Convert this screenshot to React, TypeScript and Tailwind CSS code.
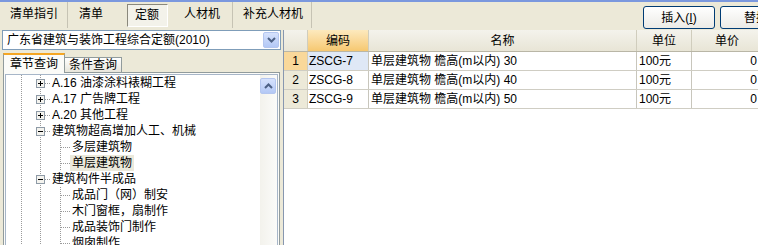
import React from "react";

type TreeRow = {
  level: 1 | 2;
  box?: "plus" | "minus";
  label: string;
  selected?: boolean;
};

const treeRows: TreeRow[] = [
  { level: 1, box: "plus", label: "A.16 油漆涂料裱糊工程" },
  { level: 1, box: "plus", label: "A.17 广告牌工程" },
  { level: 1, box: "plus", label: "A.20 其他工程" },
  { level: 1, box: "minus", label: "建筑物超高增加人工、机械" },
  { level: 2, label: "多层建筑物" },
  { level: 2, label: "单层建筑物", selected: true },
  { level: 1, box: "minus", label: "建筑构件半成品" },
  { level: 2, label: "成品门（网）制安" },
  { level: 2, label: "木门窗框，扇制作" },
  { level: 2, label: "成品装饰门制作" },
  { level: 2, label: "烟囱制作" },
];

const gridRows = [
  { no: 1, code: "ZSCG-7", name: "单层建筑物 檐高(m以内) 30", unit: "100元", price: "0" },
  { no: 2, code: "ZSCG-8", name: "单层建筑物 檐高(m以内) 40", unit: "100元", price: "0" },
  { no: 3, code: "ZSCG-9", name: "单层建筑物 檐高(m以内) 50", unit: "100元", price: "0" },
];

const dot = { stroke: "#9a9a9a", strokeDasharray: "1 1", strokeWidth: 1 };

// dotted guide lines + expander box for one tree row
function TreeGuide({ row }: { row: TreeRow }) {
  const w = row.level === 1 ? 45 : 64;
  return (
    <svg width={w} height="16" className="shrink-0">
      <line x1="15.5" y1="0" x2="15.5" y2="16" {...dot} />
      <line x1="34.5" y1="0" x2="34.5" y2="16" {...dot} />
      {row.level === 1 && <line x1="39" y1="8.5" x2="45" y2="8.5" {...dot} />}
      {row.level === 2 && (
        <>
          <line x1="54.5" y1="0" x2="54.5" y2="16" {...dot} />
          <line x1="55" y1="8.5" x2="64" y2="8.5" {...dot} />
        </>
      )}
      {row.box && (
        <>
          <rect x="30.5" y="4.5" width="8" height="8" fill="#f4f3ee" stroke="#8e9aa6" />
          <line x1="32" y1="8.5" x2="37" y2="8.5" stroke="#000" />
          {row.box === "plus" && <line x1="34.5" y1="6" x2="34.5" y2="11" stroke="#000" />}
        </>
      )}
    </svg>
  );
}

function Chevron({ up }: { up?: boolean }) {
  return (
    <svg width="9" height="6" viewBox="0 0 9 6">
      <path
        d={up ? "M1 5 L4.5 1.5 L8 5" : "M1 1 L4.5 4.5 L8 1"}
        fill="none"
        stroke="#4d6185"
        strokeWidth="2"
      />
    </svg>
  );
}

function XpButton({ children }: { children: React.ReactNode }) {
  return (
    <div className="flex h-[23px] w-[72px] shrink-0 items-center justify-center rounded-[3px] border border-[#003c74] bg-linear-to-b from-[#ffffff] to-[#ecebe6] text-[12px] text-black">
      {children}
    </div>
  );
}

export default function App() {
  return (
    <div className="relative h-[245px] w-[758px] overflow-hidden bg-[#ece9d8] font-['Liberation_Sans','Noto_Sans_CJK_SC',sans-serif] text-[12px] leading-[16px] text-black">
      {/* top strip */}
      <div className="h-[2px] bg-[#7b98de]" />
      <div className="flex h-[27px] items-stretch">
        <div className="flex h-[26px] items-center">
          <div className="flex h-full w-[68px] items-center border-r border-[#c6c3b4] pl-[10px] pb-[2px] text-[12px]">清单指引</div>
          <div className="flex h-full w-[57px] items-center pl-[11px] pb-[2px]">清单</div>
          <div className="ml-[2px] flex h-[23px] w-[41px] items-center border-t-[1px] border-l-[1px] border-[#8a887c] border-r-[1px] border-b-[1px] border-r-white border-b-white bg-[#f3f2ea] pl-[7px]">定额</div>
          <div className="ml-[5px] flex h-full w-[60px] items-center border-r border-[#c6c3b4] pl-[11px] pb-[2px]">人材机</div>
          <div className="flex h-full w-[79px] items-center border-r border-[#c6c3b4] pl-[10px] pb-[2px]">补充人材机</div>
        </div>
        <div className="flex-1" />
        <div className="-mr-[34px] flex gap-[5px] pt-[4px]">
          <XpButton>
            插入(<span className="underline">I</span>)
          </XpButton>
          <XpButton>替换</XpButton>
        </div>
      </div>

      <div className="flex h-[216px]">
        {/* left column */}
        <div className="flex w-[281px] shrink-0 flex-col">
          <div className="mt-[1px] ml-[2px] flex h-[20px] w-[279px] shrink-0 items-center border border-[#7f9db9] bg-white pl-[4px]">
            <span className="flex-1 whitespace-nowrap">广东省建筑与装饰工程综合定额(2010)</span>
            <div className="mr-[1px] flex h-[16px] w-[16px] items-center justify-center rounded-[2px] border border-[#b4c6ef] bg-linear-to-b from-[#d6e2fc] to-[#b3c8f5]">
              <Chevron />
            </div>
          </div>

          <div className="flex h-[22px] shrink-0 items-end pl-[3px]">
            <div className="relative z-10 -mb-[1px] flex h-[20px] w-[62px] items-center justify-center border-x border-t-[2px] border-x-[#919b9c] border-t-[#f5a623] bg-[#fbfbf8] text-[12px]">
              章节查询
            </div>
            <div className="flex h-[15px] w-[57px] items-center justify-center border-t border-r border-[#919b9c] bg-linear-to-b from-[#ffffff] to-[#e8e6dc]">
              条件查询
            </div>
          </div>

          <div className="ml-[3px] flex min-h-0 w-[277px] flex-1 border border-b-0 border-[#919b9c] bg-[#fbfbf8] p-[1px] pb-0">
            <div className="flex min-h-0 flex-1 overflow-hidden border border-b-0 border-[#a7b6c8] bg-white">
              <div className="flex min-h-0 flex-1 flex-col overflow-hidden">
                {treeRows.map((row, i) => (
                  <div key={i} className="flex h-[16px] shrink-0 items-center whitespace-nowrap">
                    <TreeGuide row={row} />
                    <span
                      className={
                        row.selected
                          ? "bg-[#ebe9db] px-[2px] leading-[16px]"
                          : row.level === 2
                          ? "px-[2px] leading-[16px]"
                          : "px-[1px] leading-[16px]"
                      }
                    >
                      {row.label}
                    </span>
                  </div>
                ))}
              </div>
              {/* scrollbar */}
              <div className="flex w-[17px] shrink-0 flex-col bg-linear-to-r from-[#f3f2ec] to-[#fbfbf9] pt-[3px]">
                <div className="flex h-[16px] w-[16px] items-center justify-center rounded-[2px] border border-[#b4c6ef] bg-linear-to-b from-[#d6e2fc] to-[#b3c8f5]">
                  <Chevron up />
                </div>
              </div>
            </div>
          </div>
        </div>

        {/* right column: grid */}
        <div className="flex flex-1 pl-[2px]">
          <div className="mt-[1px] flex flex-1 flex-col border-l border-[#8797b0] bg-white">
            <div className="flex h-[22px] shrink-0 border-b border-[#b9b6a6] bg-linear-to-b from-[#f4f3ec] to-[#e8e5d6] text-center">
              <div className="w-[24px] shrink-0 border-r border-[#d0cdbd]" />
              <div className="flex w-[61px] shrink-0 items-center justify-center border-r border-[#d0cdbd] bg-linear-to-b from-[#fde9bd] to-[#f6c870]">编码</div>
              <div className="flex w-[268px] shrink-0 items-center justify-center border-r border-[#d0cdbd]">名称</div>
              <div className="flex w-[55px] shrink-0 items-center justify-center border-r border-[#d0cdbd]">单位</div>
              <div className="flex w-[70px] shrink-0 items-center justify-center">单价</div>
            </div>
            {gridRows.map((r) => (
              <div key={r.no} className="flex h-[19px] shrink-0 border-b border-[#cfcdc3]">
                <div
                  className={`flex w-[24px] shrink-0 items-center justify-center border-r border-[#d0cdbd] ${
                    r.no === 1 ? "bg-[#f9d89a]" : "bg-[#ece9d8]"
                  }`}
                >
                  {r.no}
                </div>
                <div
                  className={`flex w-[61px] shrink-0 items-center border-r border-[#c8c6bc] pl-[1px] ${
                    r.no === 1 ? "bg-[#dfe8f6]" : ""
                  }`}
                >
                  {r.code}
                </div>
                <div className="flex w-[268px] shrink-0 items-center whitespace-nowrap border-r border-[#c8c6bc] pl-[2px]">{r.name}</div>
                <div className="flex w-[55px] shrink-0 items-center border-r border-[#c8c6bc] pl-[2px]">{r.unit}</div>
                <div className="flex w-[70px] shrink-0 items-center justify-end pr-[5px]">{r.price}</div>
              </div>
            ))}
            <div className="flex-1" />
          </div>
        </div>
      </div>
    </div>
  );
}
